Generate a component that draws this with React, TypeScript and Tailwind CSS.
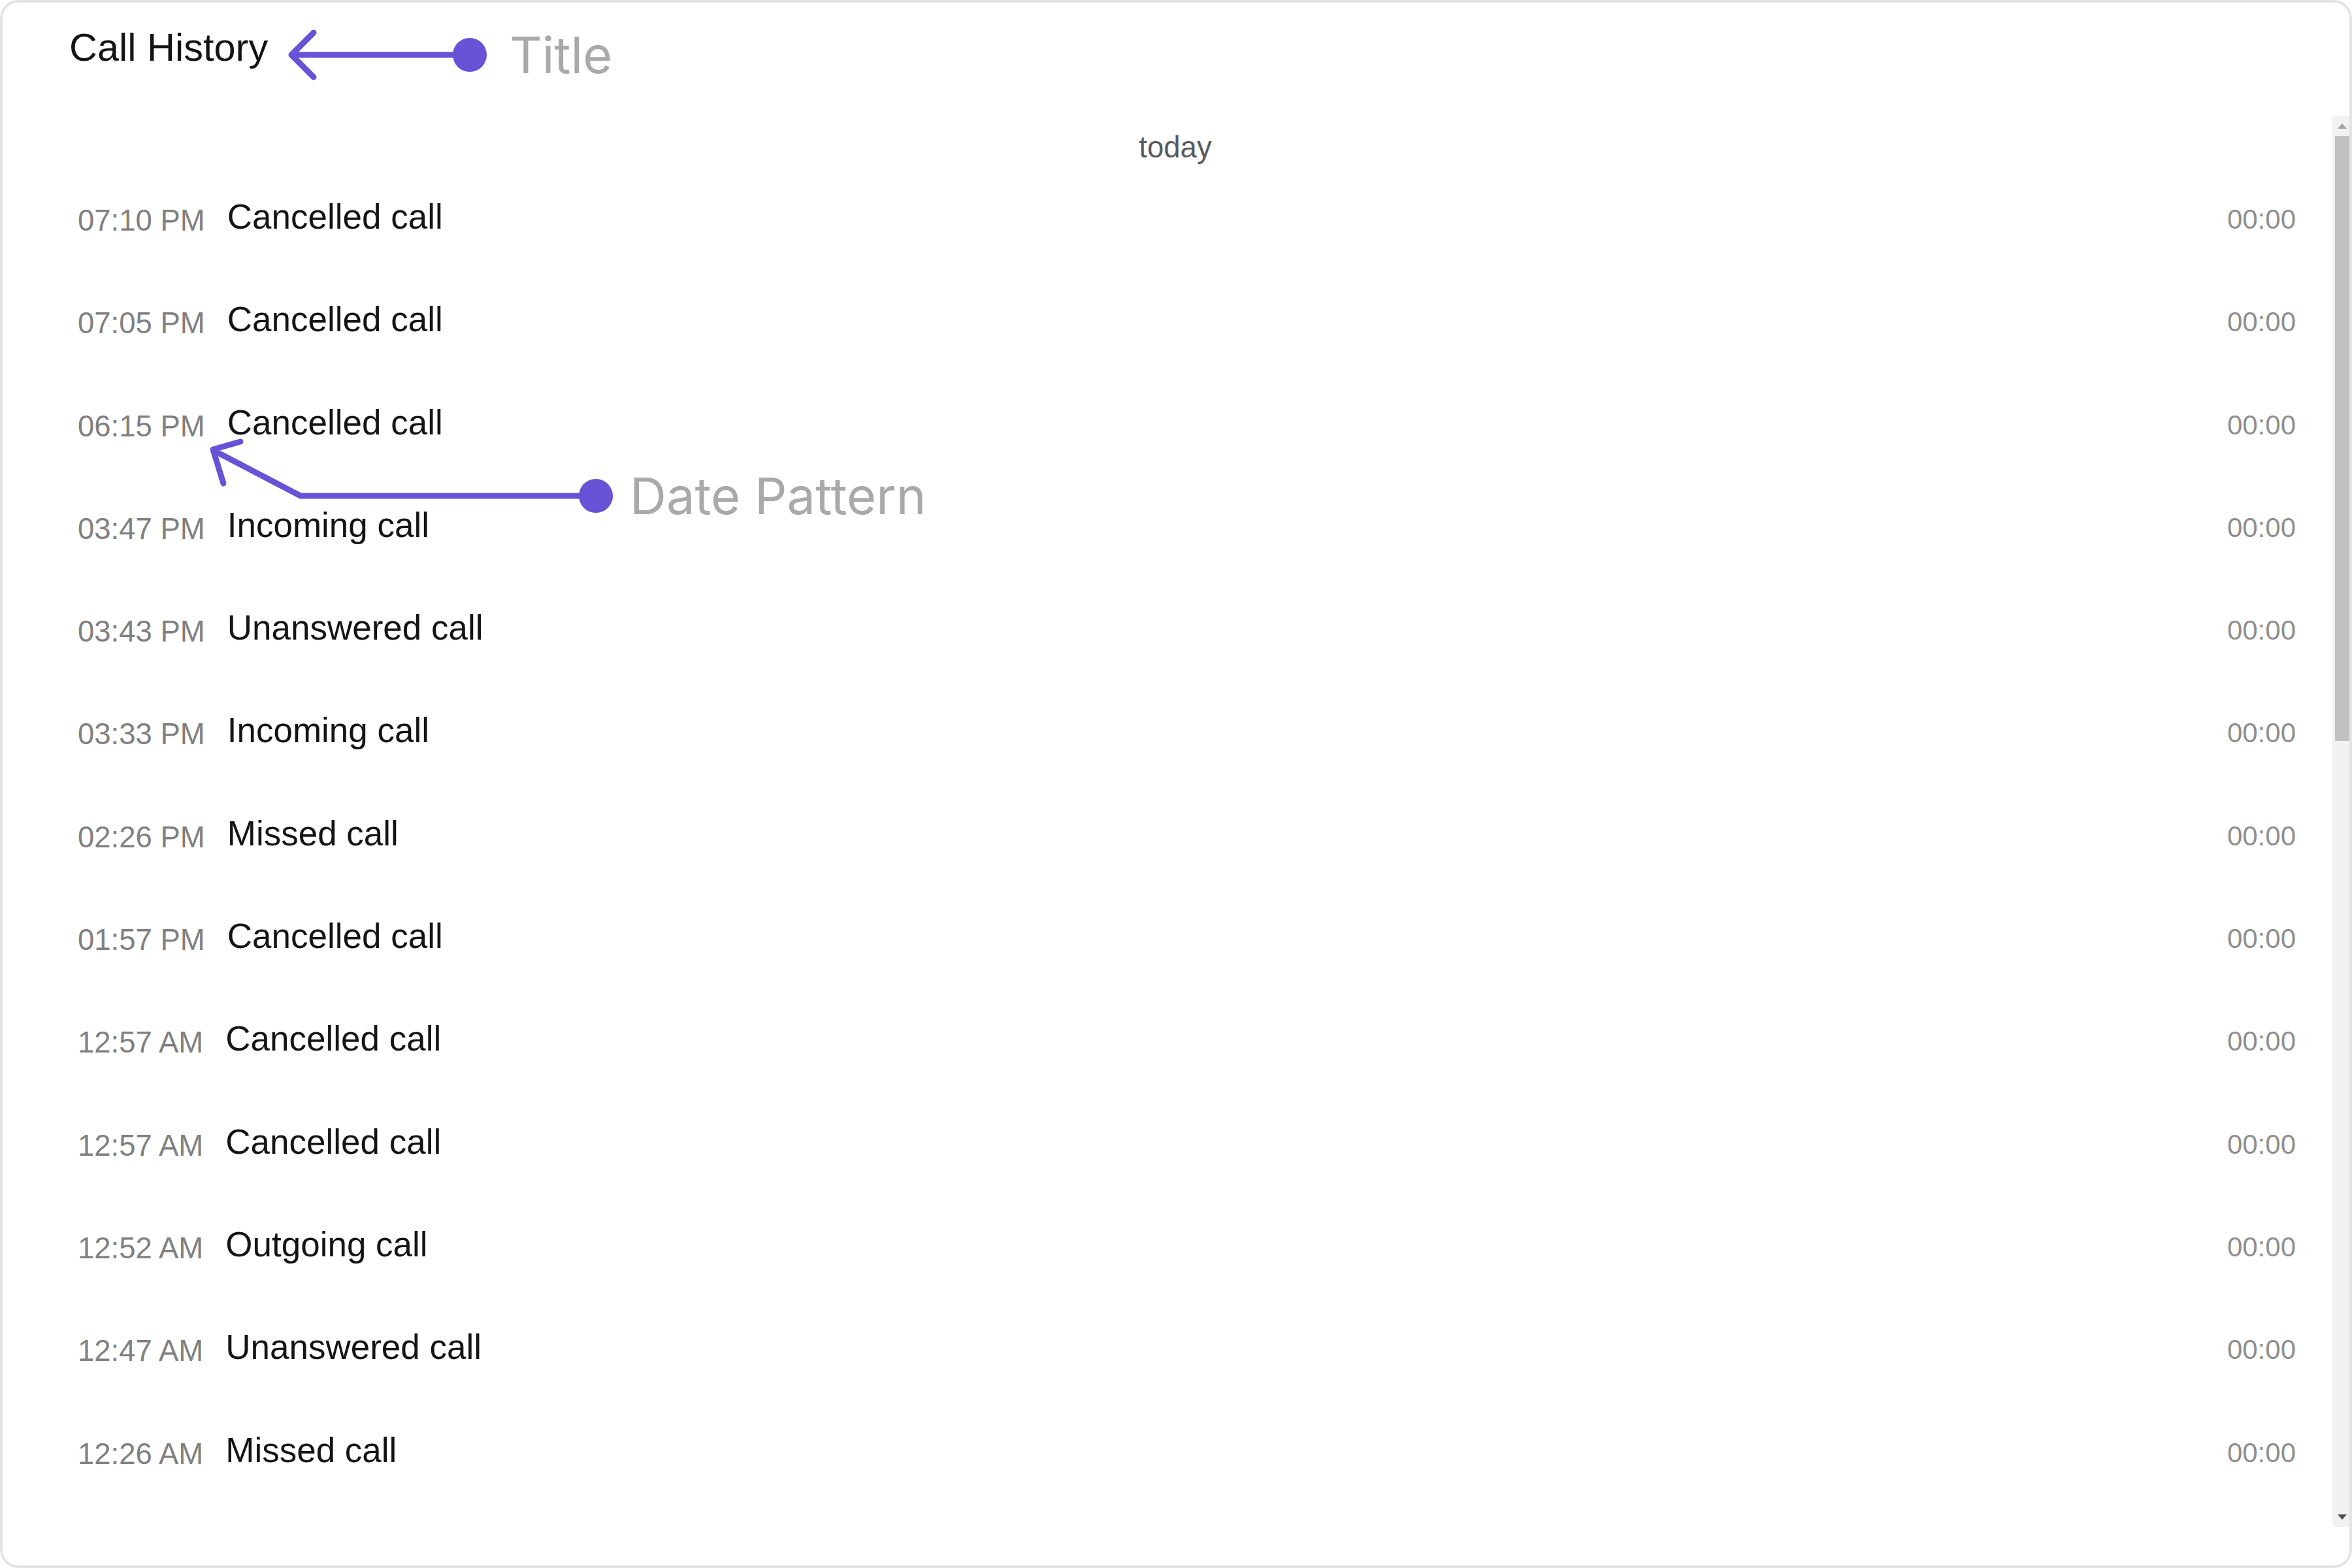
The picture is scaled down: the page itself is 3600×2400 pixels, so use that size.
import React from "react";

const rows: { time: string; title: string }[] = [
  { time: "07:10 PM", title: "Cancelled call" },
  { time: "07:05 PM", title: "Cancelled call" },
  { time: "06:15 PM", title: "Cancelled call" },
  { time: "03:47 PM", title: "Incoming call" },
  { time: "03:43 PM", title: "Unanswered call" },
  { time: "03:33 PM", title: "Incoming call" },
  { time: "02:26 PM", title: "Missed call" },
  { time: "01:57 PM", title: "Cancelled call" },
  { time: "12:57 AM", title: "Cancelled call" },
  { time: "12:57 AM", title: "Cancelled call" },
  { time: "12:52 AM", title: "Outgoing call" },
  { time: "12:47 AM", title: "Unanswered call" },
  { time: "12:26 AM", title: "Missed call" },
];

function Scrollbar() {
  return (
    <div className="flex w-[26px] shrink-0 flex-col bg-[#f1f1f1]">
      <div className="flex h-[30px] shrink-0 items-center justify-center pl-[4px]">
        <svg width="14" height="8" viewBox="0 0 14 8">
          <polygon points="7,0 14,8 0,8" fill="#a3a3a3" />
        </svg>
      </div>
      <div className="ml-[4px] h-[926px] w-[22px] shrink-0 bg-[#c1c1c1]" />
      <div className="flex-1" />
      <div className="flex h-[30px] shrink-0 items-center justify-center pl-[4px]">
        <svg width="14" height="8" viewBox="0 0 14 8">
          <polygon points="0,0 14,0 7,8" fill="#505050" />
        </svg>
      </div>
    </div>
  );
}

export default function App() {
  return (
    <div className="relative h-[2400px] w-[3600px] bg-white font-['Liberation_Sans',Arial,sans-serif]">
      <div className="flex h-full w-full flex-col overflow-hidden rounded-[28px] border-[4px] border-[#e3e3e3] bg-white">
        <div className="h-[174px] shrink-0 pl-[102px] pt-[36px]">
          <h1 className="text-[59.5px] leading-[66px] text-[#141414]">Call History</h1>
        </div>
        <div className="flex h-[2159px] shrink-0">
          <div className="min-w-0 flex-1 overflow-hidden">
            <div className="pb-[6px] pl-[24px] pt-[26px] text-center text-[45.5px] leading-[44px] text-[#5a5a5a]">
              today
            </div>
            {rows.map((r, i) => (
              <div
                key={i}
                className="flex h-[157.3px] items-baseline gap-[34px] pl-[115px] pr-[56px] pt-[48px]"
              >
                <span className="relative top-[3px] shrink-0 text-[45.5px] leading-[60px] text-[#808080]">
                  {r.time}
                </span>
                <span className="text-[53px] leading-[60px] text-[#141414]">{r.title}</span>
                <span className="ml-auto text-[42px] leading-[60px] text-[#8f8f8f]">00:00</span>
              </div>
            ))}
          </div>
          <Scrollbar />
        </div>
      </div>

      <svg
        className="pointer-events-none absolute left-0 top-0"
        width="3600"
        height="2400"
        viewBox="0 0 3600 2400"
      >
        <g stroke="#6852d6" strokeWidth="9" strokeLinecap="round" strokeLinejoin="round" fill="none">
          <polyline points="480,50 446,84 480,118" />
          <line x1="448" y1="84" x2="719" y2="84" />
          <polyline points="368,676 326,688 342,740" />
          <polyline points="328,690 460,759 912,759" />
        </g>
        <circle cx="719" cy="84" r="26" fill="#6852d6" />
        <circle cx="912" cy="759" r="26" fill="#6852d6" />
      </svg>
      <div className="pointer-events-none absolute left-[780px] top-[46px] font-['Inter',sans-serif] text-[77px] leading-[77px] text-[#a9a9a9]">
        Title
      </div>
      <div className="pointer-events-none absolute left-[964px] top-[721px] font-['Inter',sans-serif] text-[77.5px] leading-[77.5px] text-[#a9a9a9]">
        Date Pattern
      </div>
    </div>
  );
}
